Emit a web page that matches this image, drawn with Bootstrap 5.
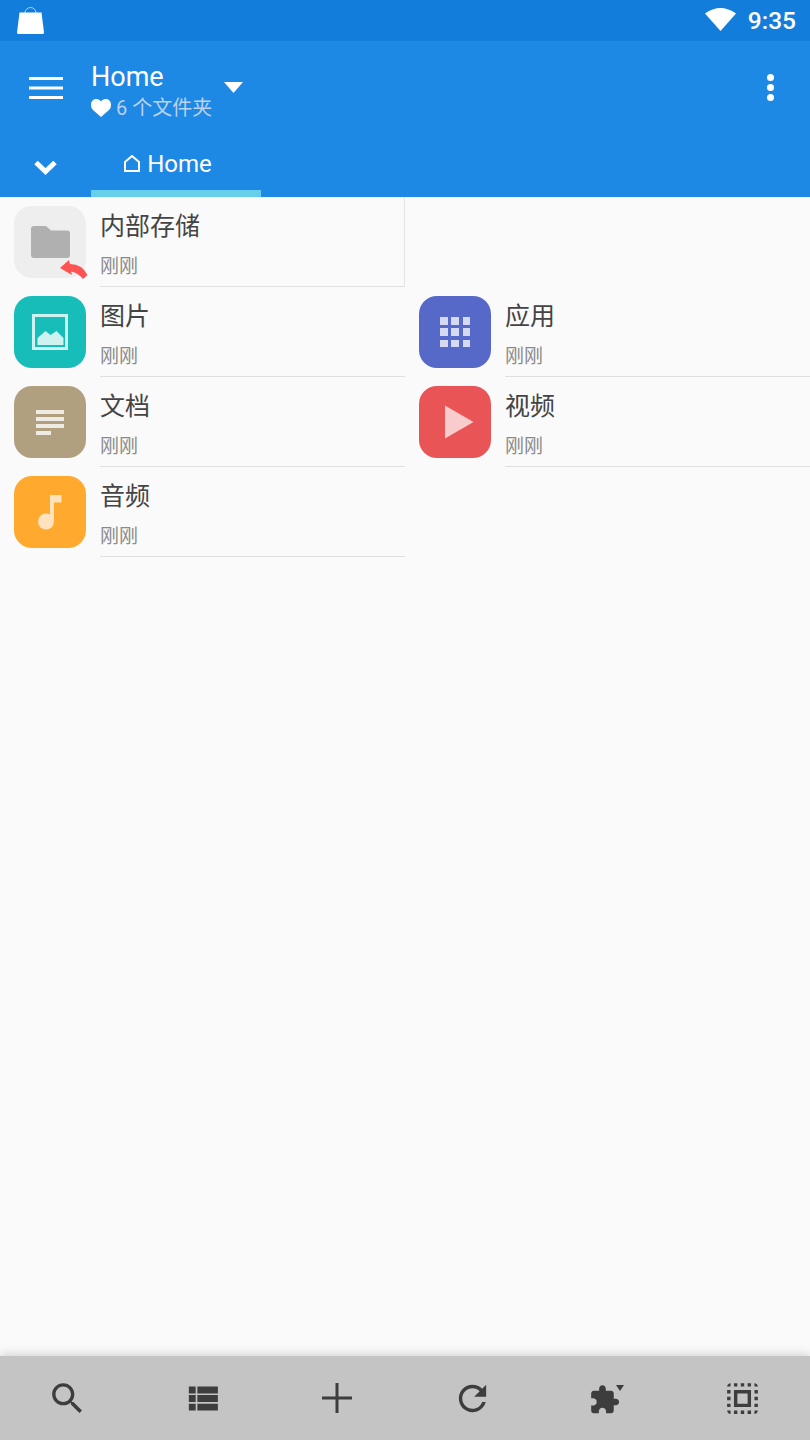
<!DOCTYPE html>
<html lang="zh-CN">
<head>
  <meta charset="UTF-8" />
  <meta name="viewport" content="width=device-width, initial-scale=1">
  <title>Home</title>
  <link href="https://cdn.jsdelivr.net/npm/bootstrap@5.3.3/dist/css/bootstrap.min.css" rel="stylesheet">
  <style>
    html, body { height: 100%; }
    body {
      background-color: #fafafa;
      font-family: Roboto, "Noto Sans CJK SC", sans-serif;
      overflow: hidden;
    }
    .page { height: 1440px; }
    .status-bar { height: 41px; background: #137ddc; padding: 0 14px 0 17px; color: #fff; }
    .status-time { font-size: 24.500px; font-weight: 500; line-height: 1; margin-left: 12px; padding-top: 2px; }
    .app-bar { height: 156px; background: #1e88e5; color: #fff; }
    .title-row { height: 97px; }
    .menu-btn { width: 91px; padding-left: 29px; padding-bottom: 4px; }
    .title-main { font-size: 27px; line-height: 32px; padding-top: 3px; }
    .title-sub { font-size: 20px; line-height: 28px; color: #bdd2ef; padding-top: 1px; }
    .title-sub svg { margin-right: 5px; }
    .caret-down { margin-left: 12px; margin-top: -4px; }
    .more-btn { padding-right: 36px; padding-bottom: 3px; }
    .tab-row { height: 59px; }
    .chevron-cell { width: 91px; padding-left: 34px; }
    .home-tab {
      width: 170px;
      font-size: 24px;
      border-bottom: 7px solid #66d0ec;
      padding-right: 16px;
    }
    .home-tab svg { margin-right: 7px; margin-top: -2px; }
    .file-item { height: 90px; padding-left: 14px; }
    .file-item.edge { border-right: 1px solid #e6e6e6; }
    .tile { width: 72px; height: 72px; border-radius: 18px; margin-top: 9px; margin-right: 14px; flex-shrink: 0; position: relative; }
    .tile svg { display: block; overflow: visible; }
    .tile-storage { background: #eeeeee; }
    .tile-image { background: #17bdb9; }
    .tile-apps { background: #5668c8; }
    .tile-docs { background: #b0a080; }
    .tile-video { background: #e95456; }
    .tile-audio { background: #ffa92e; }
    .file-text { border-bottom: 1px solid #e0e0e0; padding-top: 12px; }
    .file-name { font-size: 25px; line-height: 30px; color: #444; font-family: "Noto Sans CJK SC", sans-serif; }
    .file-time { font-size: 19px; line-height: 24px; margin-top: 14px; color: #8a8a8a; font-family: "Noto Sans CJK SC", sans-serif; }
    .bottom-bar { height: 84px; background: #c4c4c4; box-shadow: 0 -2px 9px rgba(0, 0, 0, .16); position: relative; }
    .tool-cell { color: #3d3d3d; }
  </style>
</head>
<body>

<div class="page d-flex flex-column">
  <div class="status-bar d-flex align-items-center justify-content-between">
    <svg width="27" height="28" viewBox="0 0 27 28" class="mb-1 mt-1">
      <path d="M8 8V6a5.500 5.500 0 0 1 11 0v2" fill="none" stroke="#d5e6f8" stroke-width=".8"/>
      <path d="M2.500 5.500h22L27 25.500q.1 1.500-1.500 1.500h-24Q0 27 0 25.500z" fill="#fff"/>
    </svg>
    <div class="d-flex align-items-center">
      <svg width="31" height="24" viewBox="0 0 31 24" class="mb-1"><path d="M0 6.500Q15.500-4.500 31 6.500L15.500 24z" fill="#fff"/></svg>
      <span class="status-time">9:35</span>
    </div>
  </div>

  <div class="app-bar">
    <div class="title-row d-flex align-items-center">
      <div class="menu-btn">
        <svg width="34" height="22" viewBox="0 0 34 22" class="d-block" fill="#fff">
          <rect width="34" height="3"/><rect y="9.500" width="34" height="3"/><rect y="19" width="34" height="3"/>
        </svg>
      </div>
      <div>
        <div class="title-main">Home</div>
        <div class="title-sub d-flex align-items-center">
          <svg width="20" height="19" viewBox="0 0 20 19"><path d="M10 19L2 12C0 10 0 8 0 6.500 0 3 2.500 1 5.500 1 7.500 1 9 2 10 3.500 11 2 12.500 1 14.500 1 17.500 1 20 3 20 6.500 20 8 20 10 18 12z" fill="#fff"/></svg>
          <span>6 个文件夹</span>
        </div>
      </div>
      <svg class="caret-down" width="19" height="11" viewBox="0 0 19 11"><path d="M0 0h19l-9.500 11z" fill="#fff"/></svg>
      <div class="more-btn ms-auto">
        <svg width="7" height="28" viewBox="0 0 7 28" class="d-block" fill="#fff">
          <circle cx="3.500" cy="3.500" r="3.500"/><circle cx="3.500" cy="13.500" r="3.500"/><circle cx="3.500" cy="23.500" r="3.500"/>
        </svg>
      </div>
    </div>
    <div class="tab-row d-flex">
      <div class="chevron-cell d-flex align-items-center">
        <svg width="23" height="15" viewBox="0 0 23 15"><path d="M2 2.500l9.500 9 9.500-9" fill="none" stroke="#fff" stroke-width="5"/></svg>
      </div>
      <div class="home-tab d-flex align-items-center justify-content-center">
        <svg width="16" height="17" viewBox="0 0 16 17"><path d="M1 16V7l7-6 7 6v9z" fill="none" stroke="#fff" stroke-width="2"/></svg>
        <span>Home</span>
      </div>
    </div>
  </div>

  <main class="flex-grow-1">
    <div class="row g-0">
      <div class="col-6 file-item edge d-flex">
        <div class="tile tile-storage">
          <svg width="72" height="72" viewBox="0 0 72 72">
            <path d="M20 20h12l5 4.500h16q3 0 3 3V49q0 3-3 3H20q-3 0-3-3V23q0-3 3-3z" fill="#b0b0b0"/>
            <path d="M46 62L55 54 56 58Q68 58 73.500 69L69 73Q63 66 57 65.500L58 69Z" fill="#ff5252"/>
          </svg>
        </div>
        <div class="file-text flex-grow-1">
          <div class="file-name">内部存储</div>
          <div class="file-time">刚刚</div>
        </div>
      </div>
      <div class="col-6"></div>

      <div class="col-6 file-item d-flex">
        <div class="tile tile-image">
          <svg width="72" height="72" viewBox="0 0 72 72">
            <rect x="19.500" y="19.500" width="33" height="33" fill="none" stroke="#cdf2ef" stroke-width="3"/>
            <path d="M23.500 49V42l8-7 5 4 6-4 7 7v7z" fill="#cdf2ef"/>
          </svg>
        </div>
        <div class="file-text flex-grow-1">
          <div class="file-name">图片</div>
          <div class="file-time">刚刚</div>
        </div>
      </div>
      <div class="col-6 file-item d-flex">
        <div class="tile tile-apps">
          <svg width="72" height="72" viewBox="0 0 72 72" fill="#d5d9f2">
            <rect x="21" y="21" width="8" height="8"/><rect x="32" y="21" width="8" height="8"/><rect x="44" y="21" width="7" height="8"/>
            <rect x="21" y="32" width="8" height="8"/><rect x="32" y="32" width="8" height="8"/><rect x="44" y="32" width="7" height="8"/>
            <rect x="21" y="44" width="8" height="7"/><rect x="32" y="44" width="8" height="7"/><rect x="44" y="44" width="7" height="7"/>
          </svg>
        </div>
        <div class="file-text flex-grow-1">
          <div class="file-name">应用</div>
          <div class="file-time">刚刚</div>
        </div>
      </div>

      <div class="col-6 file-item d-flex">
        <div class="tile tile-docs">
          <svg width="72" height="72" viewBox="0 0 72 72" fill="#efebe4">
            <rect x="22" y="24" width="28" height="4"/><rect x="22" y="31" width="28" height="4"/>
            <rect x="22" y="38" width="28" height="4"/><rect x="22" y="45" width="15" height="4"/>
          </svg>
        </div>
        <div class="file-text flex-grow-1">
          <div class="file-name">文档</div>
          <div class="file-time">刚刚</div>
        </div>
      </div>
      <div class="col-6 file-item d-flex">
        <div class="tile tile-video">
          <svg width="72" height="72" viewBox="0 0 72 72"><path d="M26 19.500L54.500 36 26 52.500z" fill="#f8cccd"/></svg>
        </div>
        <div class="file-text flex-grow-1">
          <div class="file-name">视频</div>
          <div class="file-time">刚刚</div>
        </div>
      </div>

      <div class="col-6 file-item d-flex">
        <div class="tile tile-audio">
          <svg width="72" height="72" viewBox="0 0 72 72">
            <path d="M36 19h11.500v7.500H40V46h-4z" fill="#ffe3bd"/>
            <circle cx="32" cy="45.500" r="8" fill="#ffe3bd"/>
          </svg>
        </div>
        <div class="file-text flex-grow-1">
          <div class="file-name">音频</div>
          <div class="file-time">刚刚</div>
        </div>
      </div>
    </div>
  </main>

  <div class="bottom-bar row g-0 align-items-center">
    <div class="col-2 tool-cell d-flex justify-content-center">
      <svg width="41" height="41" viewBox="0 0 24 24" fill="currentColor"><path d="M15.500 14h-.79l-.28-.27C15.410 12.590 16 11.110 16 9.500 16 5.910 13.090 3 9.500 3S3 5.910 3 9.500 5.910 16 9.500 16c1.610 0 3.090-.59 4.230-1.570l.27.28v.79l5 4.990L20.490 19l-4.990-5zm-6 0C7.010 14 5 11.990 5 9.500S7.010 5 9.500 5 14 7.010 14 9.500 11.990 14 9.500 14z"/></svg>
    </div>
    <div class="col-2 tool-cell d-flex justify-content-center">
      <svg width="41" height="41" viewBox="0 0 24 24" fill="currentColor"><path d="M4 14h4v-4H4v4zm0 5h4v-4H4v4zM4 9h4V5H4v4zm5 5h12v-4H9v4zm0 5h12v-4H9v4zM9 5v4h12V5H9z"/></svg>
    </div>
    <div class="col-2 tool-cell d-flex justify-content-center">
      <svg width="30" height="30" viewBox="0 0 30 30" fill="currentColor"><rect y="13.500" width="30" height="3"/><rect x="13.500" width="3" height="30"/></svg>
    </div>
    <div class="col-2 tool-cell d-flex justify-content-center">
      <svg width="41" height="41" viewBox="0 0 24 24" fill="currentColor"><path d="M17.650 6.350C16.200 4.900 14.210 4 12 4c-4.420 0-7.990 3.580-7.990 8s3.570 8 7.990 8c3.730 0 6.840-2.550 7.730-6h-2.080c-.82 2.330-3.040 4-5.650 4-3.310 0-6-2.690-6-6s2.690-6 6-6c1.660 0 3.140.69 4.220 1.780L13 11h7V4l-2.350 2.350z"/></svg>
    </div>
    <div class="col-2 tool-cell d-flex justify-content-center">
      <svg width="41" height="41" viewBox="0 0 41 41" fill="currentColor">
        <g transform="translate(1.500 6) scale(1.330)"><path d="M20.500 11H19V7c0-1.100-.9-2-2-2h-4V3.500C13 2.120 11.880 1 10.500 1S8 2.120 8 3.500V5H4c-1.100 0-1.990.9-1.990 2v3.800H3.500c1.490 0 2.700 1.210 2.700 2.700s-1.210 2.700-2.700 2.700H2V20c0 1.100.9 2 2 2h3.800v-1.500c0-1.490 1.210-2.700 2.700-2.700 1.490 0 2.700 1.210 2.700 2.700V22H17c1.100 0 2-.9 2-2v-4h1.500c1.380 0 2.500-1.120 2.500-2.500S21.880 11 20.500 11z"/></g>
        <path d="M29 7h8l-4 6z"/>
      </svg>
    </div>
    <div class="col-2 tool-cell d-flex justify-content-center">
      <svg width="41" height="41" viewBox="0 0 24 24" fill="currentColor"><path d="M3 5h2V3c-1.100 0-2 .9-2 2zm0 8h2v-2H3v2zm4 8h2v-2H7v2zM3 9h2V7H3v2zm10-6h-2v2h2V3zm6 0v2h2c0-1.100-.9-2-2-2zM5 21v-2H3c0 1.100.9 2 2 2zm-2-4h2v-2H3v2zM9 3H7v2h2V3zm2 18h2v-2h-2v2zm8-8h2v-2h-2v2zm0 8c1.100 0 2-.9 2-2h-2v2zm0-12h2V7h-2v2zm0 8h2v-2h-2v2zm-4 4h2v-2h-2v2zm0-16h2V3h-2v2zM7 17h10V7H7v10zm2-8h6v6H9V9z"/></svg>
    </div>
  </div>
</div>

<script src="https://cdn.jsdelivr.net/npm/bootstrap@5.3.3/dist/js/bootstrap.bundle.min.js"></script>
</body>
</html>
